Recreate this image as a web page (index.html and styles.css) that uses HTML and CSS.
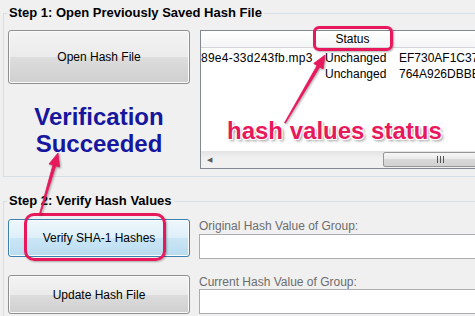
FILE: index.html
```html
<!DOCTYPE html>
<html lang="en">
<head>
    <meta charset="UTF-8">
    <meta name="viewport" content="width=device-width, initial-scale=1.0">
    <title>Hash File Verifier</title>
    <link rel="stylesheet" href="styles.css">
</head>
<body>
    <div class="window">
        <fieldset class="group group-open">
            <legend>Step 1: Open Previously Saved Hash File</legend>
            <div class="open-side">
                <button class="btn">Open Hash File</button>
                <div class="result">Verification<br>Succeeded</div>
            </div>
            <div class="listview">
                <div class="lv-header">
                    <div class="col col-file"></div>
                    <div class="col col-status">Status</div>
                    <div class="col col-hash"></div>
                </div>
                <div class="lv-body">
                    <div class="lv-row">
                        <div class="col col-file">89e4-33d243fb.mp3</div>
                        <div class="col col-status">Unchanged</div>
                        <div class="col col-hash">EF730AF1C37</div>
                    </div>
                    <div class="lv-row">
                        <div class="col col-file"></div>
                        <div class="col col-status">Unchanged</div>
                        <div class="col col-hash">764A926DBBE</div>
                    </div>
                </div>
                <div class="hscroll">
                    <div class="sb-arrow">&#9664;</div>
                    <div class="sb-track">
                        <div class="sb-thumb"><span class="grip"></span></div>
                    </div>
                </div>
            </div>
        </fieldset>

        <fieldset class="group group-verify">
            <legend>Step 2: Verify Hash Values</legend>
            <div class="verify-grid">
                <button class="btn btn-focus">Verify SHA-1 Hashes</button>
                <div class="field">
                    <label>Original Hash Value of Group:</label>
                    <div class="textbox"></div>
                </div>
                <button class="btn btn-update">Update Hash File</button>
                <div class="field">
                    <label class="label-tight">Current Hash Value of Group:</label>
                    <div class="textbox"></div>
                </div>
            </div>
        </fieldset>

        <!-- annotations -->
        <div class="note">hash values status</div>
        <div class="mark mark-status"></div>
        <div class="mark mark-verify"></div>
        <svg class="arrows" width="475" height="316" viewBox="0 0 475 316">
            <polygon points="285.4,123.3 319.7,67 323.1,69 325,55 313.7,63.4 317.1,65.4 284.6,122.7"/>
            <polygon points="40.5,214.1 55.7,165.9 59.6,167.1 58,153 49,163.9 52.9,165.1 39.5,213.9"/>
        </svg>
    </div>
</body>
</html>
```

FILE: styles.css
```css
* {
    margin: 0;
    padding: 0;
    box-sizing: border-box;
    font-family: 'Liberation Sans', Arial, sans-serif;
}

body {
    background: #f0f0f0;
    width: 475px;
    height: 316px;
    overflow: hidden;
}

.window {
    position: relative;
    width: 475px;
    height: 316px;
    padding-top: 6px;
    overflow: hidden;
}

/* group boxes */
.group {
    border: 1px solid #d5dfe5;
    border-right: none;
    margin-left: 3px;
    padding: 0 0 0 4px;
    min-width: 0;
}

.group legend {
    font-size: 13px;
    font-weight: bold;
    line-height: 14px;
    color: #000;
    padding: 0 2px;
    margin-left: -1px;
}

.group-open {
    display: flex;
    gap: 10px;
    padding-top: 10px;
    padding-bottom: 7px;
}

.group-verify {
    margin-top: 17px;
    padding-top: 11px;
    border-bottom: none;
    height: 140px;
}

/* buttons */
.btn {
    display: block;
    width: 182px;
    font-size: 12px;
    color: #000;
    border: 1px solid #8e8f8f;
    border-radius: 3px;
    background: linear-gradient(#f3f3f3 0%, #ebebeb 50%, #dddddd 50%, #cfcfcf 100%);
    box-shadow: inset 0 0 0 1px #fbfbfb;
}

.open-side {
    width: 182px;
    flex: none;
}

.open-side .btn {
    height: 54px;
}

.btn-focus {
    height: 38px;
    border-color: #3c7fb1;
    background: linear-gradient(#eef7fc 0%, #deeff9 50%, #cbe6f5 50%, #b9dcef 100%);
}

.btn-update {
    height: 39px;
}

.result {
    margin-top: 19px;
    text-align: center;
    font-size: 24px;
    font-weight: bold;
    line-height: 27px;
    color: #16169e;
}

/* list view */
.listview {
    flex: 1;
    height: 139px;
    margin-right: -20px;
    background: #fff;
    border: 1px solid #828790;
    font-size: 12px;
    color: #000;
    display: flex;
    flex-direction: column;
}

.lv-header {
    display: flex;
    height: 17px;
    border-bottom: 1px solid #d5d5d5;
    background: linear-gradient(#ffffff, #f4f5f6);
}

.lv-header .col {
    border-right: 1px solid #e3e5e7;
    line-height: 16px;
    text-align: center;
}

.col {
    white-space: nowrap;
    overflow: hidden;
}

.col-file {
    width: 113px;
    flex: none;
}

.col-status {
    width: 78px;
    flex: none;
}

.col-hash {
    flex: 1;
}

.lv-body {
    flex: 1;
    padding-top: 2px;
}

.lv-row {
    display: flex;
    height: 16px;
    line-height: 16px;
}

.lv-row .col-file {
    text-align: right;
    padding-right: 3px;
    letter-spacing: 0.25px;
}

.lv-row .col-status {
    padding-left: 11px;
}

.lv-row .col-hash {
    padding-left: 7px;
}

/* horizontal scrollbar */
.hscroll {
    display: flex;
    height: 17px;
    background: linear-gradient(#e3e3e3, #f0f0f0 40%, #f0f0f0);
}

.sb-arrow {
    width: 17px;
    font-size: 7px;
    line-height: 17px;
    text-align: center;
    color: #5a5a5a;
}

.sb-track {
    flex: 1;
    padding: 1px 0 1px 165px;
}

.sb-thumb {
    width: 124px;
    height: 15px;
    border: 1px solid #969696;
    border-radius: 2px;
    background: linear-gradient(#f6f6f6, #e8e8e8 50%, #d9d9d9 50%, #d2d2d2);
    display: flex;
    justify-content: center;
    align-items: center;
}

.grip {
    width: 7px;
    height: 7px;
    background: repeating-linear-gradient(90deg, #555 0 1px, transparent 1px 3px);
    margin-left: -10px;
}

/* step 2 */
.verify-grid {
    display: grid;
    grid-template-columns: 182px 1fr;
    grid-template-rows: 40px 39px;
    column-gap: 9px;
    row-gap: 16px;
    margin-right: -20px;
}

.verify-grid .btn {
    align-self: start;
}

.field label {
    display: block;
    font-size: 12px;
    line-height: 15px;
    color: #6d6d6d;
}

.field .label-tight {
    line-height: 14px;
}

.textbox {
    height: 25px;
    background: #fff;
    border: 1px solid #abadb3;
}

/* annotations */
.note {
    position: absolute;
    left: 227px;
    top: 117px;
    font-size: 24px;
    font-weight: bold;
    line-height: 28px;
    color: #e8185d;
    white-space: nowrap;
    text-shadow: -1px -1px 0 #fff, 1px -1px 0 #fff, -1px 1px 0 #fff, 1px 1px 0 #fff,
        2px 2px 3px rgba(0, 0, 0, 0.45);
}

.mark {
    position: absolute;
    border: 3px solid #e8185d;
    box-shadow: 1px 1px 2px rgba(0, 0, 0, 0.3);
}

.mark-status {
    left: 313px;
    top: 26px;
    width: 80px;
    height: 25px;
    border-radius: 6px;
}

.mark-verify {
    left: 24px;
    top: 213px;
    width: 142px;
    height: 48px;
    border-radius: 10px;
}

.arrows {
    position: absolute;
    left: 0;
    top: 0;
    pointer-events: none;
}

.arrows polygon {
    fill: #e8185d;
    stroke: #e8185d;
    stroke-width: 0.8;
    stroke-linejoin: round;
    filter: drop-shadow(1px 1px 1px rgba(0, 0, 0, 0.35));
}
```
